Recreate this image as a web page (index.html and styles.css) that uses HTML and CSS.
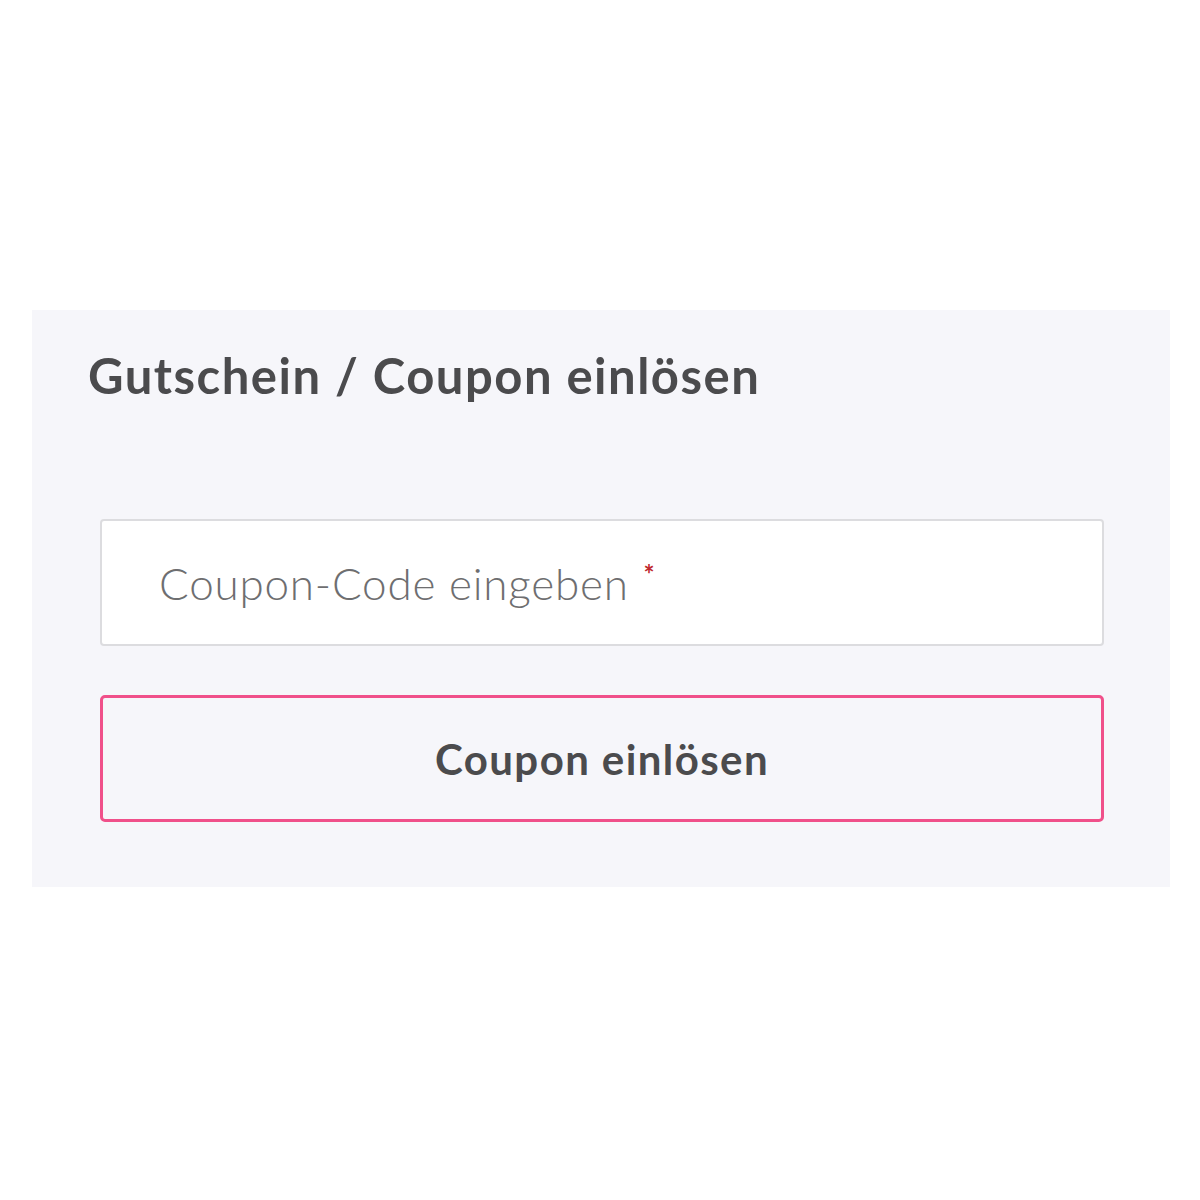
FILE: index.html
```html
<!DOCTYPE html>
<html lang="de">
<head>
    <meta charset="UTF-8">
    <meta name="viewport" content="width=device-width, initial-scale=1.0">
    <title>Gutschein / Coupon einlösen</title>
    <link rel="stylesheet" href="styles.css">
</head>
<body>
    <div class="page">
        <div class="coupon-box">
            <h2 class="coupon-title">Gutschein / Coupon einlösen</h2>
            <form class="coupon-form" onsubmit="return false;">
                <div class="field">
                    <input type="text" id="coupon-code" class="coupon-input">
                    <label for="coupon-code" class="field-label">Coupon-Code eingeben <span class="required">*</span></label>
                </div>
                <button type="submit" class="coupon-button">Coupon einlösen</button>
            </form>
        </div>
    </div>
</body>
</html>
```

FILE: styles.css
```css
body {
    margin: 0;
    background-color: #ffffff;
    font-family: Lato, "Open Sans", sans-serif;
    color: #4b4b4d;
}

.page {
    padding: 310px 30px 0 32px;
}

.coupon-box {
    width: 1138px;
    height: 577px;
    box-sizing: border-box;
    background-color: #f6f6fa;
    padding: 22px 66px 0 56px;
}

.coupon-title {
    margin: 0;
    font-size: 49px;
    font-weight: 700;
    letter-spacing: 1.5px;
    line-height: 86px;
    color: #4b4b4d;
}

.coupon-form {
    margin: 101px 0 0 12px;
    display: flex;
    flex-direction: column;
    gap: 49px;
}

.field {
    position: relative;
}

.coupon-input {
    display: block;
    width: 100%;
    height: 127px;
    box-sizing: border-box;
    border: 2px solid #dcdcdf;
    border-radius: 4px;
    background: #ffffff;
    padding: 0 58px;
    font-family: inherit;
    font-size: 40px;
}

/* label sits over the input like a placeholder */
.field-label {
    position: absolute;
    left: 59px;
    top: -8px;
    line-height: 127px;
    font-size: 44px;
    font-weight: 300;
    letter-spacing: 0.8px;
    color: #6e6e70;
    pointer-events: none;
}

.required {
    color: #c0282d;
    font-size: 26px;
    font-weight: 700;
    vertical-align: 16px;
    margin-left: 2px;
}

.coupon-button {
    display: block;
    width: 100%;
    height: 127px;
    box-sizing: border-box;
    border: 3px solid #f0508a;
    border-radius: 5px;
    background: transparent;
    font-family: inherit;
    font-size: 42px;
    font-weight: 700;
    letter-spacing: 1.4px;
    color: #4b4b4d;
    cursor: pointer;
}
```
